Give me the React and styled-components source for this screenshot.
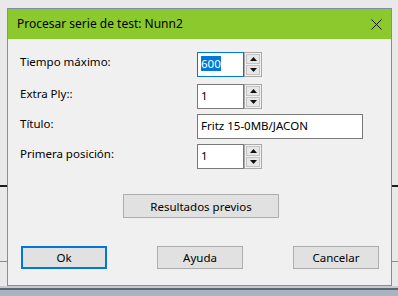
import React from "react";
import styled, { createGlobalStyle } from "styled-components";

const Global = createGlobalStyle`
  html, body { margin: 0; padding: 0; }
  body { font-family: "Noto Sans", "Liberation Sans", sans-serif; }
`;

const Desktop = styled.div`
  width: 398px;
  height: 296px;
  box-sizing: border-box;
  padding: 8px 6px 0 7px;
  overflow: hidden;
  background:
    linear-gradient(to bottom, transparent 185px, #1c1c1c 185px, #1c1c1c 187px, transparent 187px),
    linear-gradient(to bottom, transparent 261px, #8c8c8c 261px, #8c8c8c 262px, transparent 262px),
    linear-gradient(to bottom, #e9e9e9 0, #e9e9e9 286px, #c6cacf 286px, #c6cacf 288px, #5f6670 288px, #5f6670 290px, #a9b4c2 290px);
`;

const Dialog = styled.div`
  width: 385px;
  box-sizing: border-box;
  border: 1px solid #7d8fa8;
  background: #f0f0f0;
  display: flex;
  flex-direction: column;
`;

const TitleBar = styled.div`
  height: 30px;
  background: #8cc92c;
  display: flex;
  align-items: center;
  justify-content: space-between;
  padding: 0 9px 0 9px;
  font-size: 12px;
  color: #000;
`;

const Title = styled.span`
  line-height: 16px;
`;

const CloseIcon = () => (
  <svg width="11" height="11" viewBox="0 0 11 11">
    <path d="M0.5 0.5 L10.5 10.5 M10.5 0.5 L0.5 10.5" stroke="#111" strokeWidth="1" fill="none" />
  </svg>
);

const Body = styled.div`
  height: 246px;
  box-sizing: border-box;
  padding: 13px 12px 15px 12px;
  display: flex;
  flex-direction: column;
`;

const Form = styled.div`
  display: grid;
  grid-template-columns: 177px auto;
  row-gap: 5px;
`;

const Label = styled.div`
  font-size: 11.5px;
  line-height: 16px;
  padding-top: 2px;
  color: #000;
  margin-bottom: ${(p) => (p.$extra ? "2px" : "0")};
`;

const Field = styled.div`
  display: flex;
  height: 25px;
  margin-bottom: ${(p) => (p.$extra ? "2px" : "0")};
`;

const TextBox = styled.div`
  width: ${(p) => p.$w}px;
  height: 25px;
  box-sizing: border-box;
  border: 1px solid ${(p) => (p.$focus ? "#0078d7" : "#7a7a7a")};
  background: #fff;
  font-size: 11.5px;
  line-height: 16px;
  padding: 3px 0 0 3px;
  color: #000;
`;

const Selected = styled.span`
  background: #0078d7;
  color: #fff;
`;

const Spinner = styled.div`
  width: 18px;
  height: 25px;
  box-sizing: border-box;
  border: 1px solid #a9a9a9;
  background: #f0f0f0;
  display: flex;
  flex-direction: column;
  padding: 1px;
  gap: 1px;
`;

const SpinButton = styled.div`
  flex: 1;
  background: #e6e6e6;
  border: 1px solid #c4c4c4;
  display: flex;
  align-items: center;
  justify-content: center;
`;

const Arrow = ({ up }) => (
  <svg width="7" height="4" viewBox="0 0 7 4">
    {up ? <path d="M0 4 L3.5 0 L7 4 Z" fill="#111" /> : <path d="M0 0 L7 0 L3.5 4 Z" fill="#111" />}
  </svg>
);

const SpinBox = ({ value, focus }) => (
  <>
    <TextBox $w={47} $focus={focus}>{focus ? <Selected>{value}</Selected> : value}</TextBox>
    <Spinner>
      <SpinButton><Arrow up /></SpinButton>
      <SpinButton><Arrow /></SpinButton>
    </Spinner>
  </>
);

const Button = styled.button`
  width: ${(p) => p.$w}px;
  height: ${(p) => p.$h}px;
  box-sizing: border-box;
  border: ${(p) => (p.$default ? "2px solid #0078d7" : "1px solid #adadad")};
  background: #e1e1e1;
  font-family: inherit;
  font-size: 11.5px;
  color: #000;
  padding: 0;
  margin: 0;
`;

const CenterRow = styled.div`
  display: flex;
  justify-content: center;
  margin-top: 25px;
  padding-left: 3px;
`;

const ButtonRow = styled.div`
  display: flex;
  justify-content: space-between;
  margin-top: 28px;
  padding: 0 0 0 1px;
`;

export default function App() {
  return (
    <>
      <Global />
      <Desktop>
        <Dialog>
          <TitleBar>
            <Title>Procesar serie de test: Nunn2</Title>
            <CloseIcon />
          </TitleBar>
          <Body>
            <Form>
              <Label $extra>Tiempo máximo:</Label>
              <Field $extra><SpinBox value="600" focus /></Field>
              <Label>Extra Ply::</Label>
              <Field><SpinBox value="1" /></Field>
              <Label>Título:</Label>
              <Field><TextBox $w={166}>Fritz 15-0MB/JACON</TextBox></Field>
              <Label>Primera posición:</Label>
              <Field><SpinBox value="1" /></Field>
            </Form>
            <CenterRow>
              <Button $w={156} $h={24}>Resultados previos</Button>
            </CenterRow>
            <ButtonRow>
              <Button $w={86} $h={23} $default>Ok</Button>
              <Button $w={86} $h={23}>Ayuda</Button>
              <Button $w={86} $h={23}>Cancelar</Button>
            </ButtonRow>
          </Body>
        </Dialog>
      </Desktop>
    </>
  );
}
